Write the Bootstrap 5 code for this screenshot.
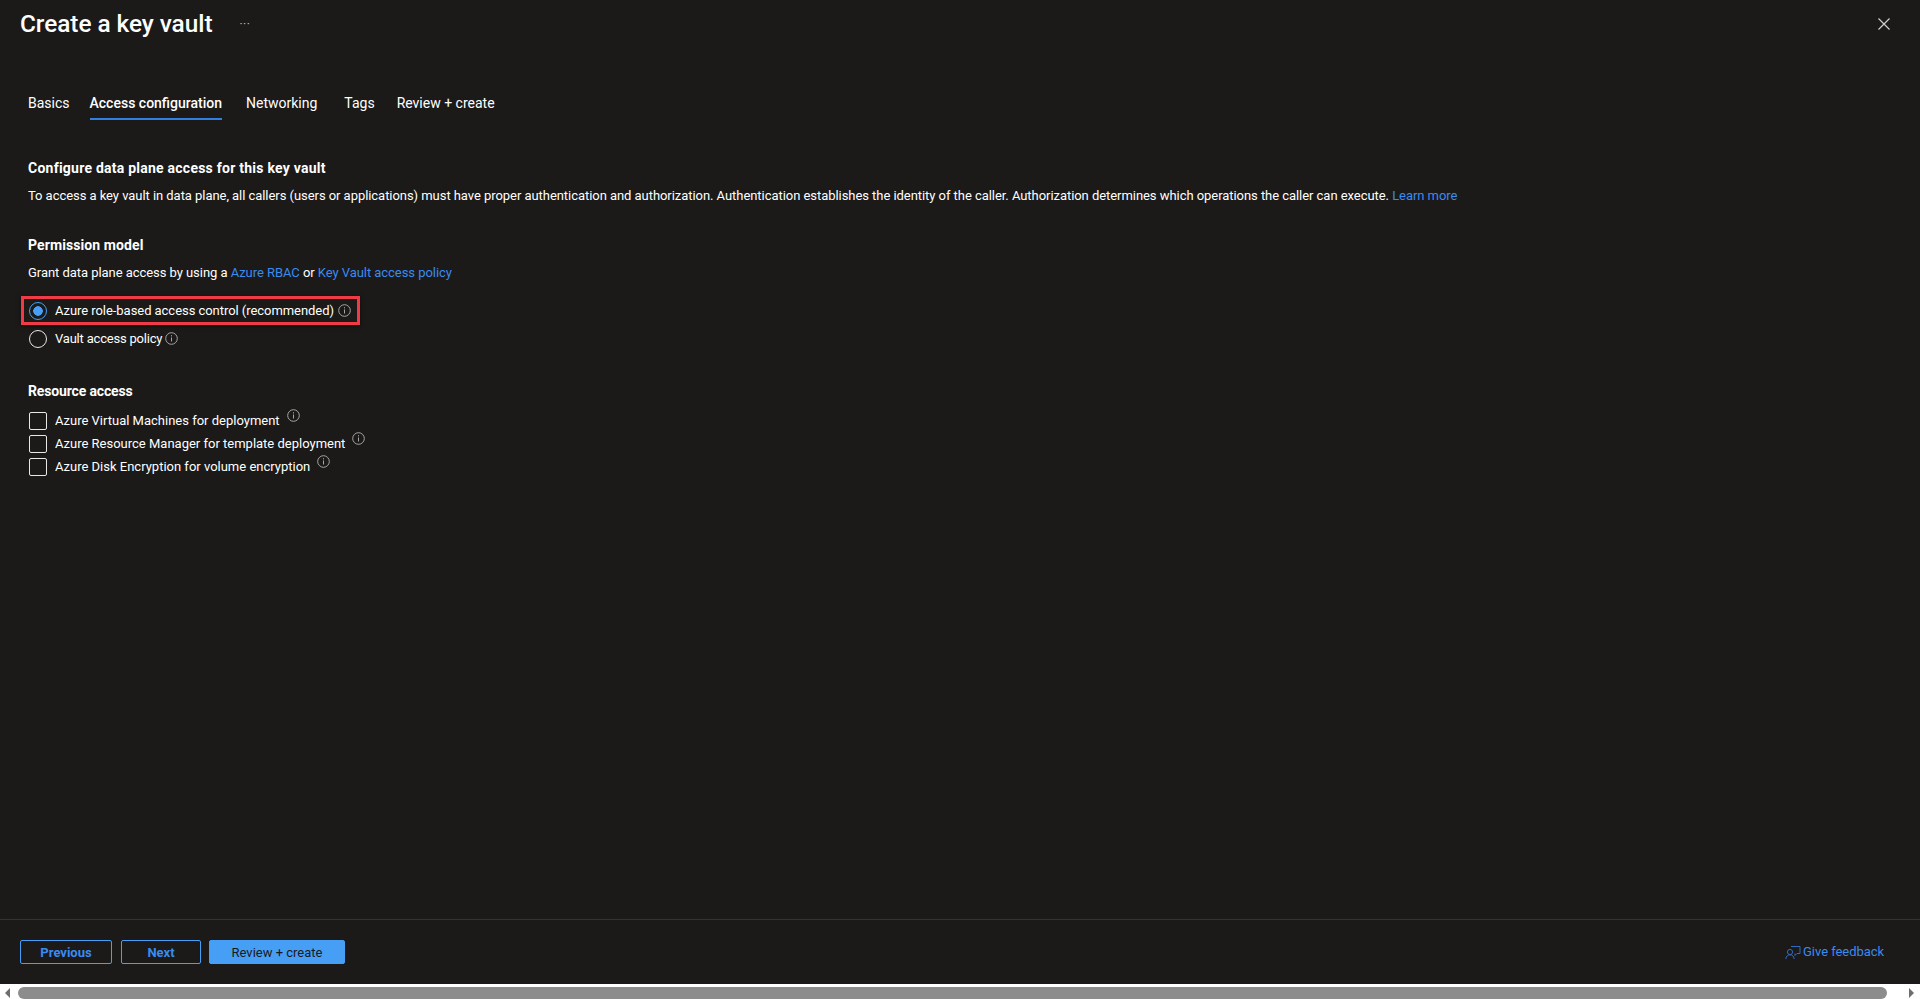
<!DOCTYPE html>
<html lang="en"><head><meta charset="utf-8"><title>Create a key vault</title>
<link href="https://cdn.jsdelivr.net/npm/bootstrap@5.3.0/dist/css/bootstrap.min.css" rel="stylesheet">
<style>
html,body{height:100%;overflow:hidden}
body{background:#1b1a19;color:#fff;font-family:Roboto,"Noto Sans",sans-serif;font-size:13px;line-height:18px;letter-spacing:-.05px}
.shell{height:999px}
.blade-head{height:48px;padding:0 20px}
.blade-title{font-size:24.4px;font-weight:500;line-height:48px;margin:0}
.more-dots{margin-left:27px;color:#bbb;font-size:12px;line-height:1;letter-spacing:.5px}
.close-x{width:12px;height:12px;margin-right:10px;stroke:#d0d0d0;stroke-width:1.2}
.tab-row{margin:38px 0 0 28px;gap:24px;border:0}
.tab-row .nav-link{padding:0;color:#fff;background:none;border:0;border-radius:0;height:34px;line-height:34px;margin:0;font-size:14px;letter-spacing:0}
.tab-row .nav-link.active{color:#fff;background:none;font-weight:500;border-bottom:2px solid #2f7fe0}
.tab-pull-a{margin-right:-4px}
.tab-push{margin-right:3px}
.tab-pull-b{margin-right:-2px}
.tab-body{padding:0 28px}
.sec-head{font-size:14px;font-weight:700;line-height:18px;margin:0;letter-spacing:.1px}
.sec-one{margin-top:39px;letter-spacing:.24px}
.sec-gap{margin-top:31px}
.sec-text{margin:10px 0 0}
.azure-link{color:#3a8bf0;text-decoration:none}
.radio-stack{margin-top:14px}
.red-frame{display:inline-flex;align-items:center;border:3px solid #f03a45;margin-left:-7px;padding:0 6px 0 5px;height:29px;box-shadow:0 1px 4px rgba(0,0,0,.5)}
.opt-row{display:flex;align-items:center;gap:8px}
.opt-row .form-check-input{width:18px;height:18px;margin:0;background-color:transparent;border:1.5px solid #e8e8e8;flex:none}
.opt-vault .form-check-input,.check-stack .form-check-input{margin-left:1px}
.opt-row .form-check-input[type=checkbox]{border-radius:2px}
.opt-row .form-check-input[type=radio]:checked{background:radial-gradient(circle,#479ef5 0 4.500px,transparent 5px);border-color:#479ef5}
.opt-vault{margin:5px 0 0}
.opt-vault .opt-row{letter-spacing:-.2px}
.check-stack{margin-top:12px;display:flex;flex-direction:column;gap:5px;letter-spacing:0}
.info-ic{width:13px;height:13px;margin-left:4px;flex:none;color:#a6a6a6}
.opt-vault .info-ic{margin-left:3px;margin-top:-2px}
.info-up{margin-left:7px;margin-top:-11px}
.sec-res{margin-top:34px;letter-spacing:-.15px}
.blade-foot{height:65px;border-top:1px solid #333;padding:20px 36px 0 20px}
.foot-btn{height:24px;padding:1px 0 0;font-size:13px;font-weight:700;line-height:20px;border-radius:2px;border:1px solid #479ef5;color:#3a8bf0;background:transparent}
.foot-prev{width:92px}
.foot-next{width:80px;margin-left:9px}
.foot-go{width:136px;margin-left:8px;background:#479ef5;color:#1b1a19;font-weight:400}
.feedback{color:#3a8bf0;text-decoration:none;gap:2px;margin-top:3px}
.feedback svg{width:16px;height:16px;stroke:#2f6cc0;fill:none}
.h-scroll{height:15px;background:#fff;padding-top:3px}
.h-thumb{height:12px;background:#8c8c8c;border-radius:6px;margin:0 15px 0 0;flex:1}
.h-arrow{width:18px;height:12px;flex:none}
</style></head>
<body>
<div class="shell d-flex flex-column">
  <header class="blade-head d-flex align-items-center justify-content-between">
    <div class="d-flex align-items-center"><h1 class="blade-title">Create a key vault</h1><span class="more-dots">···</span></div>
    <svg class="close-x" viewBox="0 0 12 12"><path d="M.5.5l11 11M11.5.5l-11 11"/></svg>
  </header>
  <main class="flex-grow-1">
    <ul class="nav tab-row">
      <li class="nav-item tab-pull-a"><a class="nav-link" href="#">Basics</a></li>
      <li class="nav-item"><a class="nav-link active" href="#">Access configuration</a></li>
      <li class="nav-item tab-push"><a class="nav-link" href="#">Networking</a></li>
      <li class="nav-item tab-pull-b"><a class="nav-link" href="#">Tags</a></li>
      <li class="nav-item"><a class="nav-link" href="#">Review + create</a></li>
    </ul>
    <div class="tab-body">
      <h2 class="sec-head sec-one">Configure data plane access for this key vault</h2>
      <p class="sec-text">To access a key vault in data plane, all callers (users or applications) must have proper authentication and authorization. Authentication establishes the identity of the caller. Authorization determines which operations the caller can execute. <a class="azure-link" href="#">Learn more</a></p>
      <h2 class="sec-head sec-gap">Permission model</h2>
      <p class="sec-text">Grant data plane access by using a <a class="azure-link" href="#">Azure RBAC</a> or <a class="azure-link" href="#">Key Vault access policy</a></p>
      <div class="radio-stack">
        <div class="red-frame"><label class="opt-row"><input class="form-check-input" type="radio" name="pm" checked>Azure role-based access control (recommended)</label><svg class="info-ic" viewBox="0 0 13 13" fill="none" stroke="currentColor"><circle cx="6.5" cy="6.5" r="5.8"/><path d="M6.5 5.5v4M6.5 3.2v1.2"/></svg></div>
        <div class="opt-vault d-flex align-items-center"><label class="opt-row"><input class="form-check-input" type="radio" name="pm">Vault access policy</label><svg class="info-ic" viewBox="0 0 13 13" fill="none" stroke="currentColor"><circle cx="6.5" cy="6.5" r="5.8"/><path d="M6.5 5.5v4M6.5 3.2v1.2"/></svg></div>
      </div>
      <h2 class="sec-head sec-res">Resource access</h2>
      <div class="check-stack">
        <div class="d-flex align-items-center"><label class="opt-row"><input class="form-check-input" type="checkbox">Azure Virtual Machines for deployment</label><svg class="info-ic info-up" viewBox="0 0 13 13" fill="none" stroke="currentColor"><circle cx="6.5" cy="6.5" r="5.8"/><path d="M6.5 5.5v4M6.5 3.2v1.2"/></svg></div>
        <div class="d-flex align-items-center"><label class="opt-row"><input class="form-check-input" type="checkbox">Azure Resource Manager for template deployment</label><svg class="info-ic info-up" viewBox="0 0 13 13" fill="none" stroke="currentColor"><circle cx="6.5" cy="6.5" r="5.8"/><path d="M6.5 5.5v4M6.5 3.2v1.2"/></svg></div>
        <div class="d-flex align-items-center"><label class="opt-row"><input class="form-check-input" type="checkbox">Azure Disk Encryption for volume encryption</label><svg class="info-ic info-up" viewBox="0 0 13 13" fill="none" stroke="currentColor"><circle cx="6.5" cy="6.5" r="5.8"/><path d="M6.5 5.5v4M6.5 3.2v1.2"/></svg></div>
      </div>
    </div>
  </main>
  <footer class="blade-foot d-flex justify-content-between align-items-start">
    <div class="d-flex">
      <button class="btn foot-btn foot-prev" type="button">Previous</button>
      <button class="btn foot-btn foot-next" type="button">Next</button>
      <button class="btn foot-btn foot-go" type="button">Review + create</button>
    </div>
    <a class="feedback d-flex align-items-center" href="#"><svg viewBox="0 0 16 16"><path d="M6 2.500h9v7h-3l-2 2v-2"/><circle cx="5" cy="8" r="2.6"/><path d="M.8 15c.4-3 2-4.200 4.200-4.200S8.800 12 9.200 15"/></svg>Give feedback</a>
  </footer>
  <div class="h-scroll d-flex">
    <svg class="h-arrow" viewBox="0 0 18 12"><path d="M10 1v10L5 6z" fill="#6e6e6e"/></svg>
    <div class="h-thumb"></div>
    <svg class="h-arrow" viewBox="0 0 18 12"><path d="M7 1v10l5-5z" fill="#6e6e6e"/></svg>
  </div>
</div>
<script src="https://cdn.jsdelivr.net/npm/bootstrap@5.3.0/dist/js/bootstrap.bundle.min.js"></script>
</body></html>
